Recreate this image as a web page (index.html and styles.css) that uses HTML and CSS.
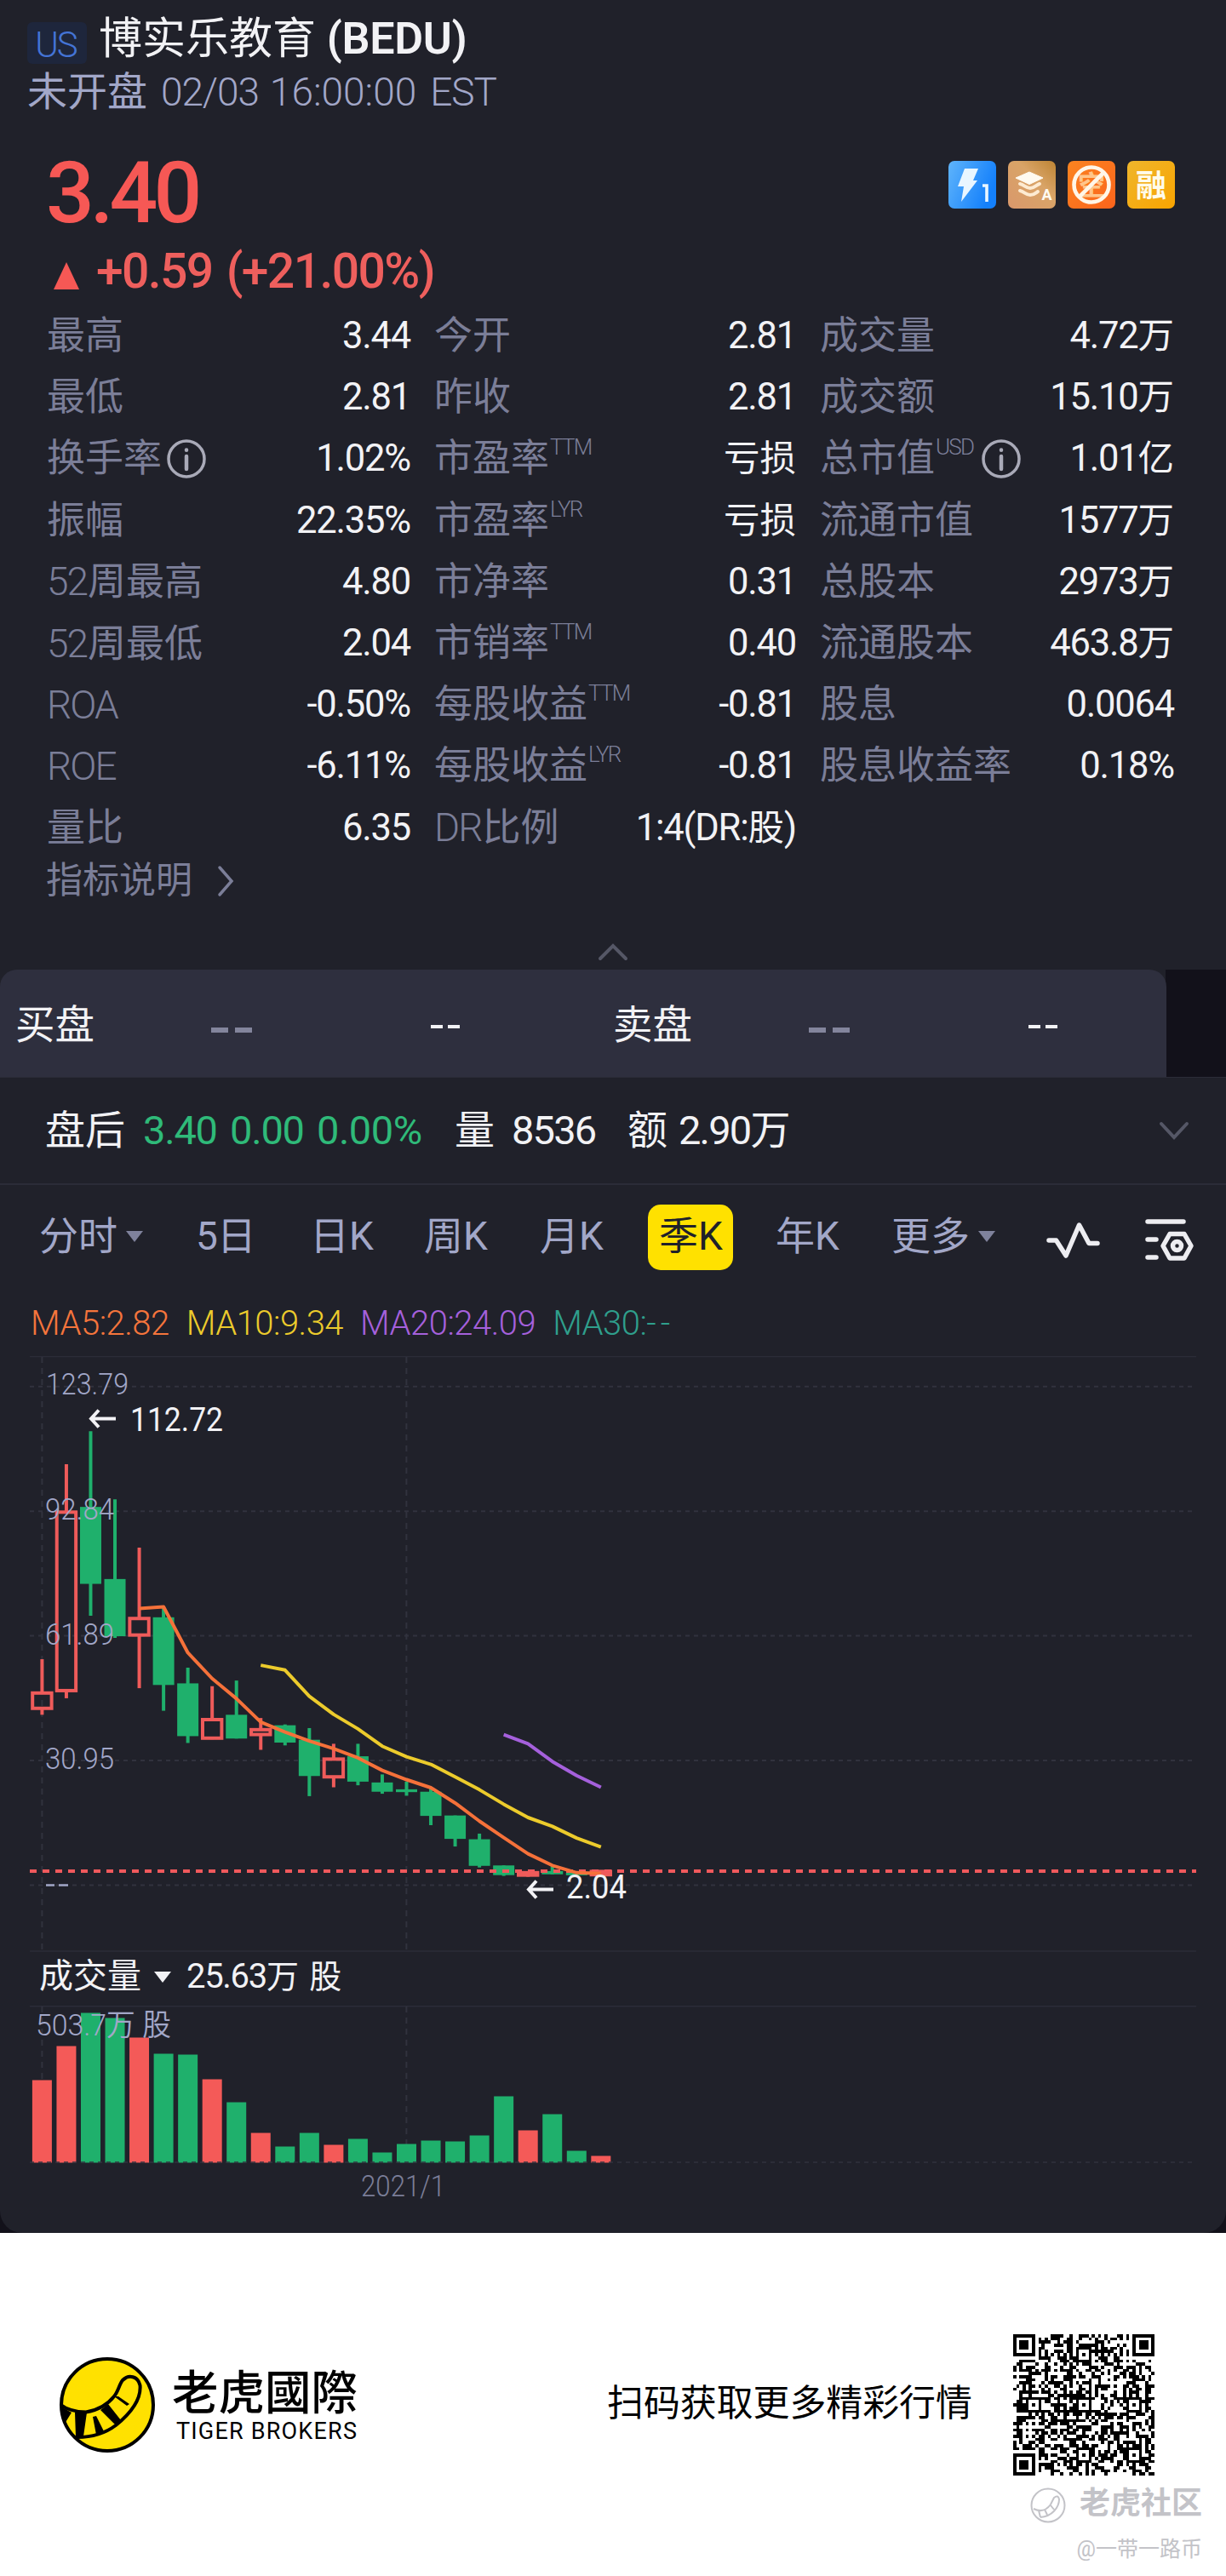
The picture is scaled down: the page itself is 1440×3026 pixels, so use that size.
FILE: index.html
```html
<!DOCTYPE html>
<html lang="zh-CN">
<head>
    <meta charset="UTF-8">
    <meta name="viewport" content="width=device-width, initial-scale=1.0">
    <title>博实乐教育 (BEDU)</title>
    <link rel="stylesheet" href="styles.css">
</head>
<body>
    <div class="app">
        <div class="card">
            <!-- 标题 -->
            <header class="header">
                <div class="title-row">
                    <span class="market">US</span>
                    <span class="name">博实乐教育 <b>(BEDU)</b></span>
                </div>
                <div class="status">未开盘 <span class="num">02/03</span> <span class="num time">16:00:00</span> <span class="num">EST</span></div>
            </header>

            <!-- 价格 -->
            <section class="quote">
                <div class="price">3.40</div>
                <div class="badges">
                    <svg class="badge" viewBox="0 0 56 56">
                        <defs>
                            <linearGradient id="gBlue" x1="0" y1="0" x2="1" y2="0.4"><stop offset="0" stop-color="#5fb4fb"/><stop offset="1" stop-color="#1480fb"/></linearGradient>
                            <linearGradient id="gTan" x1="0" y1="1" x2="1" y2="0"><stop offset="0" stop-color="#d9986c"/><stop offset="0.6" stop-color="#d9a467"/><stop offset="1" stop-color="#bd8433"/></linearGradient>
                            <linearGradient id="gOrange" x1="0" y1="0" x2="1" y2="1"><stop offset="0" stop-color="#fb8420"/><stop offset="1" stop-color="#fb641c"/></linearGradient>
                            <linearGradient id="gGold" x1="0" y1="0" x2="1" y2="1"><stop offset="0" stop-color="#efb62c"/><stop offset="1" stop-color="#f9a400"/></linearGradient>
                        </defs>
                        <rect width="56" height="56" rx="7" fill="url(#gBlue)"/>
                        <path d="M19 9h16l-6 14h5L15 48l3-18h-7z" fill="#e9f6ff"/>
                        <path d="M40 29h5v19" fill="none" stroke="#e9f6ff" stroke-width="3.6"/>
                    </svg>
                    <svg class="badge" viewBox="0 0 56 56">
                        <rect width="56" height="56" rx="7" fill="url(#gTan)"/>
                        <path d="M25 13l16 7-16 7.500-16-7.500z" fill="#fffaf0" stroke="#fffaf0" stroke-linejoin="round"/>
                        <path d="M14 27c5 1 7 5 12 5s7-4 11-5M14 35c5 1 7 5 12 5s6-2 9-4" fill="none" stroke="#fdebd2" stroke-width="4" stroke-linecap="round"/>
                        <text x="45.500" y="46" text-anchor="middle" class="badge-a">A</text>
                    </svg>
                    <svg class="badge" viewBox="0 0 56 56">
                        <rect width="56" height="56" rx="7" fill="url(#gOrange)"/>
                        <text x="28" y="40" text-anchor="middle" class="badge-short">空</text>
                        <circle cx="28" cy="28" r="20.500" fill="none" stroke="#fff6e8" stroke-width="4.600"/>
                        <path d="M14 42l28-28" stroke="#fff6e8" stroke-width="4.600"/>
                    </svg>
                    <svg class="badge" viewBox="0 0 56 56">
                        <rect width="56" height="56" rx="7" fill="url(#gGold)"/>
                        <text x="28" y="41.500" text-anchor="middle" class="badge-text">融</text>
                    </svg>
                </div>
            </section>
            <div class="change"><i class="tri-up"></i><span>+0.59</span><span>(+21.00%)</span></div>

            <!-- 指标 -->
            <section class="stats">
                <div class="stat"><span>最高</span><em>3.44</em></div>
                <div class="stat"><span>今开</span><em>2.81</em></div>
                <div class="stat"><span>成交量</span><em>4.72<u>万</u></em></div>

                <div class="stat"><span>最低</span><em>2.81</em></div>
                <div class="stat"><span>昨收</span><em>2.81</em></div>
                <div class="stat"><span>成交额</span><em>15.10<u>万</u></em></div>

                <div class="stat"><span>换手率</span><svg class="info" viewBox="0 0 46 46"><circle cx="23" cy="23" r="21" /><path d="M23 20v15"/><path d="M23 12.500v.2"/></svg><em>1.02%</em></div>
                <div class="stat"><span>市盈率<sup>TTM</sup></span><em><u>亏损</u></em></div>
                <div class="stat"><span>总市值<sup>USD</sup></span><svg class="info" viewBox="0 0 46 46"><circle cx="23" cy="23" r="21" /><path d="M23 20v15"/><path d="M23 12.500v.2"/></svg><em>1.01<u>亿</u></em></div>

                <div class="stat"><span>振幅</span><em>22.35%</em></div>
                <div class="stat"><span>市盈率<sup>LYR</sup></span><em><u>亏损</u></em></div>
                <div class="stat"><span>流通市值</span><em>1577<u>万</u></em></div>

                <div class="stat"><span><i class="lat">52</i>周最高</span><em>4.80</em></div>
                <div class="stat"><span>市净率</span><em>0.31</em></div>
                <div class="stat"><span>总股本</span><em>2973<u>万</u></em></div>

                <div class="stat"><span><i class="lat">52</i>周最低</span><em>2.04</em></div>
                <div class="stat"><span>市销率<sup>TTM</sup></span><em>0.40</em></div>
                <div class="stat"><span>流通股本</span><em>463.8<u>万</u></em></div>

                <div class="stat"><span><i class="lat">ROA</i></span><em>-0.50%</em></div>
                <div class="stat"><span>每股收益<sup>TTM</sup></span><em>-0.81</em></div>
                <div class="stat"><span>股息</span><em>0.0064</em></div>

                <div class="stat"><span><i class="lat">ROE</i></span><em>-6.11%</em></div>
                <div class="stat"><span>每股收益<sup>LYR</sup></span><em>-0.81</em></div>
                <div class="stat"><span>股息收益率</span><em>0.18%</em></div>

                <div class="stat"><span>量比</span><em>6.35</em></div>
                <div class="stat"><span><i class="lat">DR</i>比例</span><em>1:4(DR:<u>股</u>)</em></div>
            </section>
            <div class="explain">指标说明
                <svg width="24" height="38" viewBox="0 0 24 38"><path d="M4 3l14 16L4 35"/></svg>
            </div>
            <div class="collapse"><svg width="36" height="22" viewBox="0 0 36 22"><path d="M3 19L18 4l15 15"/></svg></div>

            <!-- 买卖盘 -->
            <div class="book">
                <div class="book-main">
                    <div class="side"><span>买盘</span><i class="dash-big"></i><i class="dash"></i></div>
                    <div class="side"><span>卖盘</span><i class="dash-big"></i><i class="dash"></i></div>
                </div>
            </div>

            <!-- 盘后 -->
            <div class="after">
                <span class="af-label">盘后</span>
                <span class="green af-p">3.40</span>
                <span class="green af-c">0.00</span>
                <span class="green af-r">0.00%</span>
                <span class="af-l">量</span>
                <span class="af-v">8536</span>
                <span class="af-l last">额</span>
                <span class="af-a">2.90<u>万</u></span>
                <svg class="chev-down" width="36" height="24" viewBox="0 0 36 24"><path d="M3 4l15 16L33 4"/></svg>
            </div>

            <!-- 周期 -->
            <nav class="tabs">
                <span class="tab t1">分时<i class="tri"></i></span>
                <span class="tab t2"><i class="lat">5</i>日</span>
                <span class="tab t3">日<i class="lat">K</i></span>
                <span class="tab t4">周<i class="lat">K</i></span>
                <span class="tab t5">月<i class="lat">K</i></span>
                <span class="tab t6 active">季<i class="lat">K</i></span>
                <span class="tab t7">年<i class="lat">K</i></span>
                <span class="tab t8">更多<i class="tri"></i></span>
                <svg class="tool" width="64" height="52" viewBox="0 0 64 52"><path d="M4 27h8.500L24 45 39.500 9 51 30.500h10" /></svg>
                <svg class="tool" width="60" height="52" viewBox="0 0 60 52"><path d="M5 5h42M5 26h10M5 47h10"/><path d="M31 19.500h17l8 14-8 14.500H31l-8-14.500z"/><circle cx="39.500" cy="33.500" r="5"/></svg>
            </nav>

            <div class="ma">
                <span class="ma5">MA5:2.82</span>
                <span class="ma10">MA10:9.34</span>
                <span class="ma20">MA20:24.09</span>
                <span class="ma30">MA30:<i class="gap">--</i></span>
            </div>

            <!-- K线图 -->
            <svg id="kline" class="kline" width="1440" height="700" viewBox="0 1593 1440 700"></svg>
            <div class="vol-head">成交量<i class="tri white"></i><span>25.63<u>万</u> <u>股</u></span></div>
            <svg id="volume" class="volume" width="1440" height="240" viewBox="0 2356 1440 240"></svg>
        </div>

        <!-- 底部 -->
        <footer class="footer">
            <svg class="logo" width="112" height="112" viewBox="0 0 112 112">
                <defs><clipPath id="disc"><circle cx="56" cy="56" r="54"/></clipPath></defs>
                <circle cx="56" cy="56" r="54" fill="#ffe100"/>
                <g clip-path="url(#disc)">
                    <path d="M-1 54Q10 64 31 64.500Q52 61 64 46C69 40 70 32 74 27C81 20 92 22 94.500 33C96 50 82 67 66 80Q46 95 17 94" fill="#ffe100" stroke="#000" stroke-width="4"/>
                    <path d="M0 57l14 8-8 13zM18 65l14 0-4 28-9 1zM39 70l4-1 9 18-9 4zM48 62l9-7 15 19-6 6zM64 46l5 0 13 9-3 2z" fill="#000"/>
                </g>
                <circle cx="56" cy="56" r="54" fill="none" stroke="#000" stroke-width="4"/>
            </svg>
            <div class="brand">
                <div class="brand-cn">老虎國際</div>
                <div class="brand-en">TIGER BROKERS</div>
            </div>
            <div class="scan">扫码获取更多精彩行情</div>
            <svg id="qr" class="qr" width="166" height="166" viewBox="0 0 45 45" shape-rendering="crispEdges"></svg>
        </footer>
        <div class="watermark">
            <div class="wm-top">
                <svg width="42" height="42" viewBox="0 0 42 42"><circle cx="21" cy="21" r="19.500"/><path d="M4 25q12 6 20-5l4-8q5-4 6 2c0 9-8 20-22 21M10 27l2 8M17 26l3 6M24 21l4 5"/></svg>
                <span>老虎社区</span>
            </div>
            <div class="wm-user">@一带一路币</div>
        </div>
    </div>
    <script src="chart.js"></script>
</body>
</html>
```
FILE: styles.css
```css
* {
    box-sizing: border-box;
}
body {
    margin: 0;
    padding: 0;
    background: #ffffff;
    font-family: Roboto, "Noto Sans CJK SC", sans-serif;
}
i, em {
    font-style: normal;
}
u {
    text-decoration: none;
}
.app {
    width: 1440px;
    height: 3026px;
    position: relative;
    overflow: hidden;
    background: linear-gradient(#12111a 2623px, #ffffff 2623px);
}
.card {
    height: 2623px;
    background: #20212a;
    border-radius: 0 0 26px 26px;
    overflow: hidden;
    color: #f2f2f5;
}
svg {
    display: block;
    flex-shrink: 0;
}

/* 标题 */
.header {
    padding: 15px 0 0 32px;
    height: 137px;
}
.title-row {
    display: flex;
    align-items: center;
    height: 62px;
}
.market {
    width: 70px;
    height: 49px;
    line-height: 53px;
    margin-top: 9px;
    margin-right: 14px;
    padding-right: 3px;
    text-align: center;
    border-radius: 6px;
    background: #1e263c;
    color: #4474d6;
    font-size: 42px;
    font-weight: 300;
    letter-spacing: -2px;
}
.name {
    font-size: 51px;
    line-height: 62px;
    white-space: pre;
}
.name b {
    font-weight: 600;
    font-size: 52px;
    letter-spacing: -0.3px;
}
.status {
    display: flex;
    gap: 16px;
    font-size: 47px;
    line-height: 62px;
    color: #a2a7c8;
}
.status .num {
    font-size: 46px;
    font-weight: 300;
    letter-spacing: -1.1px;
}
.status .time {
    margin-left: -3px;
    letter-spacing: 0;
}

/* 价格 */
.quote {
    display: flex;
    justify-content: space-between;
    height: 142px;
    padding: 39px 60px 0 54px;
}
.price {
    font-size: 100px;
    line-height: 101px;
    font-weight: 500;
    letter-spacing: -5px;
    color: #f65855;
}
.badges {
    display: flex;
    gap: 14px;
    padding-top: 13px;
}
.badge {
    width: 56px;
    height: 56px;
}
.badge-a {
    font-size: 18px;
    font-weight: 700;
    fill: #fffaf0;
}
.badge-short {
    font-size: 32px;
    font-weight: 700;
    fill: #ffc58a;
}
.badge-text {
    font-size: 36px;
    font-weight: 700;
    fill: #fffbea;
}
.change {
    display: flex;
    align-items: center;
    height: 79px;
    padding-left: 63px;
    gap: 16px;
    font-size: 57px;
    font-weight: 500;
    letter-spacing: -1.6px;
    color: #ee5f5d;
}
.tri-up {
    margin: 11px 4px 0 0;
    border: 15.5px solid transparent;
    border-top: 0;
    border-bottom: 32px solid #f65855;
}

/* 指标 */
.stats {
    display: grid;
    grid-template-columns: 427px 425px 416px;
    grid-auto-rows: 72.2px;
    column-gap: 28px;
    padding: 1px 60px 0 55px;
}
.stat {
    display: flex;
    align-items: center;
    font-size: 45px;
    line-height: 72px;
    color: #7b7e98;
    white-space: nowrap;
}
.stat em {
    margin-left: auto;
    color: #f2f2f5;
    font-size: 43.500px;
    letter-spacing: -1.2px;
}
.stat u {
    font-size: 42.500px;
    letter-spacing: 0;
}
.lat {
    font-weight: 300;
    letter-spacing: -2px;
    font-size: 46px;
}
.stat .lat {
    display: inline-block;
    padding-right: 1px;
}
.stat sup {
    display: inline-block;
    margin-left: 1px;
    margin-right: 4px;
    vertical-align: 20px;
    font-size: 26px;
    line-height: 27px;
    font-weight: 300;
    letter-spacing: -1.8px;
}
.info {
    width: 46px;
    height: 46px;
    margin-left: 6px;
    fill: none;
    stroke: #a9aab8;
    stroke-width: 3.5;
    stroke-linecap: round;
}
.info path {
    stroke-width: 4.5;
}
.explain {
    display: flex;
    align-items: center;
    gap: 28px;
    height: 57px;
    padding: 0 0 6px 54px;
    font-size: 43px;
    line-height: 50px;
    color: #7b7e98;
}
.explain svg, .collapse svg, .chev-down {
    fill: none;
    stroke: #7b7e98;
    stroke-width: 3.5;
    stroke-linecap: round;
}
.explain svg {
    margin-top: 2px;
}
.collapse {
    display: flex;
    justify-content: center;
    height: 73px;
    padding-top: 41px;
}
.collapse svg, .chev-down {
    stroke: #555766;
    stroke-width: 4;
}

/* 买卖盘 */
.book {
    height: 126px;
    padding-right: 70px;
    background: linear-gradient(90deg, #20212a 1369px, #12111a 1369px);
}
.book-main {
    display: flex;
    height: 126px;
    border-radius: 20px 20px 0 0;
    background: #2e2f3e;
}
.side {
    display: flex;
    flex: 0 0 702px;
    align-items: center;
    padding-left: 18px;
    font-size: 46.500px;
}
.side span {
    margin-bottom: 5px;
}
.side:last-child {
    flex-basis: 660px;
}
.dash-big {
    width: 48px;
    height: 6px;
    margin: 16px 210px 0 137px;
    background: linear-gradient(90deg, #83859c 20px, transparent 20px, transparent 28px, #83859c 28px);
}
.dash {
    width: 34px;
    height: 4px;
    margin-top: 8px;
    background: linear-gradient(90deg, #f2f2f5 14px, transparent 14px, transparent 20px, #f2f2f5 20px);
}

/* 盘后 */
.after {
    display: flex;
    align-items: center;
    height: 127px;
    padding: 0 43px 0 53px;
    border-top: 1px solid #2b2c38;
    border-bottom: 2px solid #2b2c38;
    font-size: 47px;
    line-height: 60px;
    white-space: nowrap;
}
.after span {
    flex-shrink: 0;
    letter-spacing: -1.2px;
}
.after .af-label {
    width: 115px;
    letter-spacing: 0;
}
.green {
    color: #2fba79;
}
.af-p, .af-c {
    width: 102px;
}
.after .af-r {
    width: 162px;
    letter-spacing: -0.5px;
}
.af-l {
    width: 67px;
}
.af-l.last {
    width: 60px;
}
.af-v {
    width: 136px;
}
.after .af-v, .after .af-a {
    letter-spacing: -1.8px;
}
.chev-down {
    margin-left: auto;
}

/* 周期 */
.tabs {
    display: flex;
    align-items: center;
    height: 124px;
    margin-bottom: 5px;
    padding-left: 46px;
    color: #a2a7c8;
    font-size: 46px;
    line-height: 73px;
    white-space: nowrap;
}
.tab {
    display: flex;
    align-items: center;
    flex-shrink: 0;
    height: 77px;
    padding-bottom: 3px;
}
.tabs .lat {
    font-weight: 400;
    letter-spacing: -1px;
}
.tri {
    margin: 0 0 0 10px;
    border: 10px solid transparent;
    border-bottom: 0;
    border-top: 13px solid #7f829c;
}
.tri.white {
    border-top-color: #f2f2f5;
}
.t1 { width: 184px; }
.t2 { width: 134px; }
.t3 { width: 134px; }
.t4 { width: 136px; }
.t5 { width: 127px; }
.t6 { width: 100px; }
.t7 { width: 136px; margin-left: 50px; }
.t8 { width: 181px; }
.tab.active {
    justify-content: center;
    border-radius: 15px;
    background: #ffe100;
    color: #20212a;
}
.tool {
    margin: 4px 51px 0 0;
    fill: none;
    stroke: #ededf1;
    stroke-width: 5.5;
    stroke-linecap: round;
    stroke-linejoin: round;
}
.ma {
    display: flex;
    gap: 20px;
    height: 72px;
    padding-left: 36px;
    font-size: 40px;
    line-height: 67px;
    font-weight: 350;
    letter-spacing: -0.5px;
    white-space: nowrap;
}
.gap {
    letter-spacing: 5px;
}
.ma5 { color: #f5753c; }
.ma10 { color: #eccb2c; }
.ma20 { color: #a560dc; }
.ma30 { color: #2f9f8c; }

/* 图表 */
.kline text, .volume text {
    font-size: 35px;
    font-weight: 350;
    fill: #a2a7c8;
}
.kline .mark {
    font-size: 39px;
    font-weight: 400;
    fill: #f2f2f5;
}
.volume .axis {
    fill: #7b7e98;
}
.vol-head {
    display: flex;
    align-items: center;
    height: 63px;
    padding: 0 0 4px 46px;
    font-size: 40px;
    line-height: 58px;
}
.vol-head span {
    margin-left: 18px;
    letter-spacing: -1.3px;
    word-spacing: 5px;
}
.vol-head u {
    font-size: 38px;
}
.vol-head .tri {
    margin-left: 15px;
}

/* 底部 */
.footer {
    display: flex;
    align-items: center;
    height: 403px;
    padding-left: 70px;
    color: #000000;
}
.brand {
    flex: 0 0 531px;
    padding-left: 20px;
}
.brand-cn {
    font-family: "Noto Sans CJK TC", sans-serif;
    font-size: 54.500px;
    line-height: 60px;
    font-weight: 500;
}
.brand-en {
    padding: 2px 0 0 5px;
    font-size: 27px;
    line-height: 34px;
    letter-spacing: 1.2px;
}
.scan {
    flex: 0 0 477px;
    padding-bottom: 4px;
    font-size: 42.900px;
    line-height: 60px;
}
.watermark {
    position: absolute;
    right: 28px;
    bottom: 14px;
    color: #c3c3c8;
    text-align: right;
}
.wm-top {
    display: flex;
    align-items: center;
    gap: 16px;
    font-size: 36px;
    line-height: 42px;
    font-weight: 700;
}
.wm-top span {
    margin-top: -4px;
}
.wm-top svg {
    fill: none;
    stroke: #c3c3c8;
    stroke-width: 2;
}
.wm-user {
    margin-top: 14px;
    font-size: 25px;
    line-height: 34px;
}
```
FILE: chart.js
```javascript
const RED = '#ef5b5a';
const GREEN = '#1fb06c';
const STEP = 28.54;
const X0 = 49.4;

// 涨跌, 最高, 实体上沿, 实体下沿, 最低
const candles = [
    ['r', 56.1, 47.7, 43.9, 42.3], ['r', 104.5, 92.6, 48.3, 46.4],
    ['g', 112.7, 93.9, 74.8, 66.9], ['g', 95.8, 76.0, 61.8, 61.4],
    ['r', 83.8, 66.2, 62.1, 48.9], ['g', 68.9, 66.5, 49.7, 43.3],
    ['g', 54.0, 50.1, 37.0, 35.3], ['r', 49.4, 41.1, 36.5, 36.2],
    ['g', 50.8, 42.3, 36.4, 36.4], ['r', 41.5, 38.6, 37.4, 33.6],
    ['g', 39.9, 39.7, 35.4, 34.7], ['g', 39.0, 36.1, 27.1, 22.1],
    ['r', 35.1, 31.3, 26.9, 24.3], ['g', 35.1, 32.0, 25.7, 24.8],
    ['g', 27.5, 25.5, 23.2, 22.7], ['g', 25.7, 23.8, 23.1, 22.2],
    ['g', 24.3, 23.2, 17.2, 14.9], ['g', 17.3, 17.3, 11.5, 9.6],
    ['g', 12.8, 11.4, 4.8, 4.4], ['g', 4.9, 4.9, 2.5, 2.3],
    ['r', 3.4, 3.1, 2.5, 2.1], ['g', 4.9, 3.5, 2.7, 2.7],
    ['g', 3.1, 3.1, 2.6, 2.5], ['r', 3.5, 3.4, 2.6, 2.3]
];
const ma5 = [68.7, 69.1, 57.7, 51.3, 46.3, 40.5, 38.0, 35.8, 33.9, 31.6, 28.5, 26.2, 24.2, 20.4, 15.9, 11.8, 7.8, 4.9, 3.1, 2.9];
const ma10 = [54.6, 53.4, 46.9, 42.4, 38.8, 34.5, 31.9, 30.0, 26.9, 23.7, 20.1, 16.8, 14.6, 11.7, 9.5];
const ma20 = [37.4, 35.1, 30.7, 27.2, 24.3];
const volumes = [97, 137, 176, 170, 147, 128, 127, 98, 71, 35, 19, 35, 21, 28, 12, 22, 26, 25, 32, 78, 38, 57, 14, 8];

function y(price) {
    return 2214.5 - price * 4.732;
}
function x(i) {
    return X0 + STEP * i;
}
function line(x1, y1, x2, y2, color, width, dash) {
    return `<line x1="${x1}" y1="${y1}" x2="${x2}" y2="${y2}" stroke="${color}" stroke-width="${width}" ${dash ? `stroke-dasharray="${dash}"` : ''}/>`;
}
function label(tx, ty, text, width, cls) {
    return `<text x="${tx}" y="${ty}" textLength="${width}" lengthAdjust="spacingAndGlyphs" class="${cls || ''}">${text}</text>`;
}
function average(values, start, color) {
    const pts = values.map((v, i) => `${x(start + i)},${y(v)}`).join(' ');
    return `<polyline points="${pts}" fill="none" stroke="${color}" stroke-width="4" stroke-linejoin="round"/>`;
}

function drawKline() {
    const grid = '#31323e';
    let s = line(35, 1593.5, 1405, 1593.5, '#2b2c38', 1.5) + line(35, 2292, 1405, 2292, '#2b2c38', 1.5);
    for (let i = 0; i < 5; i++) {
        const gy = 1628.7 + i * 146.45;
        s += line(35, gy, 1405, gy, grid, 2, '5 5');
    }
    s += line(49.4, 1594, 49.4, 2290, grid, 2, '7 6') + line(477.4, 1594, 477.4, 2290, grid, 2, '7 6');

    candles.forEach(([type, high, top, bottom, low], i) => {
        const cx = x(i);
        if (type === 'g') {
            s += line(cx, y(high), cx, y(low), GREEN, 4);
            s += `<rect x="${cx - 12.5}" y="${y(top)}" width="25" height="${Math.max(3, y(bottom) - y(top))}" fill="${GREEN}"/>`;
        } else {
            s += line(cx, y(high), cx, y(top), RED, 4) + line(cx, y(bottom), cx, y(low), RED, 4);
            s += `<rect x="${cx - 11.2}" y="${y(top)}" width="22.4" height="${y(bottom) - y(top)}" fill="none" stroke="${RED}" stroke-width="4"/>`;
        }
    });
    s += line(35, 2198, 1405, 2198, '#f0595c', 4, '8 7');
    s += average(ma5, 4, '#f5713a') + average(ma10, 9, '#eccb2c') + average(ma20, 19, '#a560dc');

    s += label(54, 1638, '123.79', 97) + label(53, 1784.5, '92.84', 81) + label(53, 1931.5, '61.89', 81) + label(53, 2077.5, '30.95', 81);
    s += line(54, 2214.5, 64, 2214.5, '#a2a7c8', 2.5) + line(69, 2214.5, 80, 2214.5, '#a2a7c8', 2.5);
    s += arrow(107, 1666.5) + label(153, 1681, '112.72', 109, 'mark');
    s += arrow(621, 2219.5) + label(665, 2230, '2.04', 71, 'mark');
    document.getElementById('kline').innerHTML = s;
}
function arrow(ax, ay) {
    return `<path d="M${ax + 29} ${ay}H${ax}M${ax + 9} ${ay - 10}L${ax} ${ay}l9 10" fill="none" stroke="#f2f2f5" stroke-width="4"/>`;
}

function drawVolume() {
    let s = line(35, 2356.8, 1405, 2356.8, '#2b2c38', 1.5);
    s += line(49.4, 2357, 49.4, 2540, '#31323e', 2, '7 6') + line(477.4, 2357, 477.4, 2540, '#31323e', 2, '7 6');
    volumes.forEach((v, i) => {
        const color = candles[i][0] === 'g' ? GREEN : '#f45a58';
        s += `<rect x="${x(i) - 11.5}" y="${2540.5 - v}" width="23" height="${v}" fill="${color}"/>`;
    });
    s += line(35, 2540, 1405, 2540, '#31323e', 1.5, '5 5');
    s += label(42, 2391, '503.7万 股', 159) + label(424, 2580, '2021/1', 99, 'axis');
    document.getElementById('volume').innerHTML = s;
}

// 二维码 45 x 45
function drawQr() {
    const n = 45;
    let seed = 20220203;
    const rnd = () => {
        seed = (seed * 1103515245 + 12345) % 2147483648;
        return seed / 2147483648;
    };
    const m = [];
    for (let r = 0; r < n; r++) {
        m.push([]);
        for (let c = 0; c < n; c++) m[r].push(rnd() < 0.5);
    }
    const square = (r0, c0, size) => {
        const mid = (size - 1) / 2;
        for (let r = -1; r <= size; r++) {
            for (let c = -1; c <= size; c++) {
                if (r0 + r < 0 || c0 + c < 0 || r0 + r >= n || c0 + c >= n) continue;
                const d = Math.max(Math.abs(r - mid), Math.abs(c - mid));
                if (size === 5 && d > 2) continue;
                m[r0 + r][c0 + c] = d <= mid && d !== mid - 1;
            }
        }
    };
    for (let i = 8; i < n - 8; i++) {
        m[6][i] = m[i][6] = i % 2 === 0;
    }
    [[4, 20], [20, 4], [20, 20], [20, 36], [36, 20], [36, 36]].forEach(p => square(p[0], p[1], 5));
    square(0, 0, 7);
    square(0, 38, 7);
    square(38, 0, 7);
    let d = '';
    m.forEach((row, r) => row.forEach((on, c) => { if (on) d += `M${c} ${r}h1v1h-1z`; }));
    document.getElementById('qr').innerHTML = `<path d="${d}"/>`;
}

drawKline();
drawVolume();
drawQr();
```
